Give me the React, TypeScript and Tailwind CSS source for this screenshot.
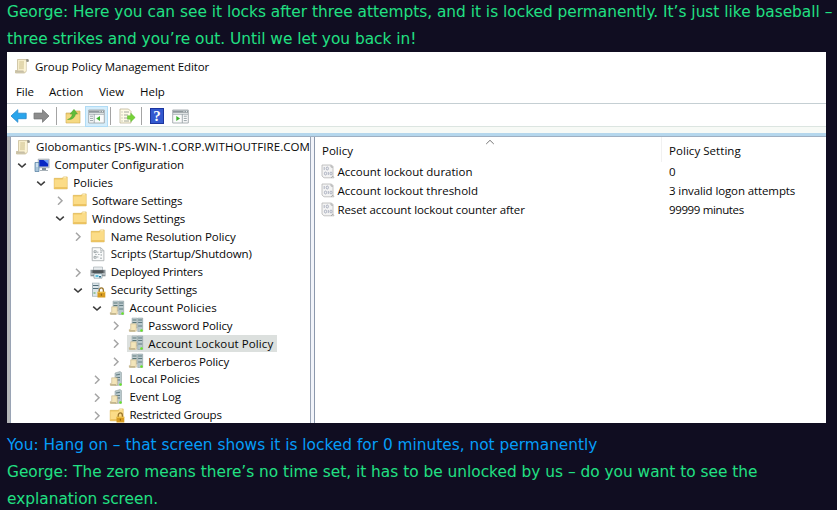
import type { ReactNode } from "react";

type IconKind = "scroll" | "computer" | "folder" | "script" | "printer" | "security" | "servers" | "server" | "lockedFolder";

function Scroll() {
  return (
    <svg width="16" height="16" viewBox="0 0 16 16">
      <path d="M3.5 1.5H14v2h-1.8v9.7l-1.5 1.8H1.5v-2.5h2z" fill="#f6edcb" stroke="#b9ab82" strokeWidth=".6" />
      <path d="M12 1.7l1-.8 1.8.8-.2 2h-2z" fill="#8e8e86" />
      <path d="M5.3 4h4.8M5.2 6h4.8M5.1 8h4.8M5 10h4.8" stroke="#cbbd8b" strokeWidth=".9" />
      <path d="M1.2 12.4h8l1.3 2.4H2z" fill="#c7bfa7" />
      <path d="M11 3v10" stroke="#fff9dd" strokeWidth="1.3" />
    </svg>
  );
}

function Folder({ locked = false }: { locked?: boolean }) {
  return (
    <svg width="16" height="16" viewBox="0 0 16 16">
      <path d="M1.2 3.3h8.2l1-1.4h3.8v12H1.2z" fill="#eec65f" stroke="#d5a83e" strokeWidth=".5" />
      <path d="M1.5 4.4h8l1.2-1.2h3.2v10.2H1.5z" fill="#fbdc87" />
      <path d="M10.5 2.3h3v1h-3.6z" fill="#fff4c6" />
      <path d="M1.5 12.9h12.7" stroke="#e3b64c" />
      {locked && <Padlock />}
    </svg>
  );
}

function Padlock() {
  return (
    <g>
      <path d="M9.2 11V8.7c0-3.7 4.2-3.7 4.2 0V11" fill="none" stroke="#99742a" strokeWidth="1.3" />
      <rect x="7.5" y="9.8" width="7.8" height="5.7" fill="#d79b20" />
      <path d="M7.5 10.3h7.8" stroke="#f2c64e" />
      <path d="M11.4 11.7v2" stroke="#946a14" strokeWidth="1.2" />
    </g>
  );
}

function TreeIcon({ kind }: { kind: IconKind }) {
  if (kind === "scroll") return <Scroll />;
  if (kind === "folder") return <Folder />;
  if (kind === "lockedFolder") return <Folder locked />;
  if (kind === "computer")
    return (
      <svg width="16" height="16" viewBox="0 0 16 16">
        <path d="M4.2 2h11v8.8h-11z" fill="#c6ccd2" stroke="#8e9aa5" strokeWidth=".5" />
        <path d="M5.2 3h9v6.5h-9z" fill="#0827c4" />
        <path d="M9.5 3h4.7v4z" fill="#6e9cf5" />
        <path d="M8 11h4v2H8z" fill="#7f8c97" />
        <path d="M6 13h8v1H6z" fill="#a7b1b8" />
        <path d="M1 5.5h4v9H1z" fill="#a9c5da" stroke="#527d9f" strokeWidth=".7" />
        <path d="M2 7h2M2 9h2" stroke="#f2faff" />
      </svg>
    );
  if (kind === "script")
    return (
      <svg width="16" height="16" viewBox="0 0 16 16">
        <path d="M2.2 1.7h8.7l3 3v10H2.2z" fill="#f9fafa" stroke="#a3a8aa" strokeWidth=".8" />
        <path d="M10.8 1.8v3h3" fill="none" stroke="#a6acad" strokeWidth=".8" />
        <path d="M4 4.8h2.2v1.8H4zM4 10.4h2.2v1.8H4zM10 6.2h2M10 12.2h2" fill="none" stroke="#8f989b" strokeWidth=".8" />
        <path d="M5.2 8.5h1.6M8 8.5h1.6M7.8 5.5v1.6M7.8 10.2v1.6M11.2 8v2" fill="none" stroke="#a5adaf" strokeWidth=".9" />
      </svg>
    );
  if (kind === "printer")
    return (
      <svg width="16" height="16" viewBox="0 0 16 16">
        <path d="M3.5 3h9v4h-9z" fill="#e9edef" stroke="#9ba5a9" strokeWidth=".6" />
        <path d="M.5 5.8h15v6.5H.5z" fill="#8b9498" />
        <path d="M2.5 6.2h11v3h-11z" fill="#4f5558" />
        <path d="M1 10h3M12 10h3" stroke="#e2e6e7" />
        <path d="M4 9.7h8v4.5H4z" fill="#e9f8fc" stroke="#74868e" strokeWidth=".6" />
        <path d="M5.5 11h3v2h-3z" fill="#61bfdd" />
        <path d="M9 12h2v1.5H9z" fill="#376b87" />
      </svg>
    );
  if (kind === "security")
    return (
      <svg width="16" height="16" viewBox="0 0 16 16">
        <path d="M2 .7h7.5v14H2z" fill="#a9b7bd" />
        <path d="M3 1.5h5.5v12.4H3z" fill="#dce6ea" />
        <path d="M3 3.5h5.5M3 6.5h5.5" stroke="#526d79" strokeWidth="1.2" />
        <path d="M3.5 11h2" stroke="#51a552" />
        <Padlock />
      </svg>
    );
  return (
    <svg width="16" height="16" viewBox="0 0 16 16">
      {kind === "servers" && (
        <g>
          <path d="M4 1h5.2v10H4z" fill="#c4d0d3" stroke="#92a3a5" strokeWidth=".5" />
          <path d="M4.5 3h4M4.5 5.5h4" stroke="#5b7777" />
        </g>
      )}
      <path d={kind === "server" ? "M6 2l5-1.5 1.5 1v12.8H6z" : "M9.7 1h5v13.5h-5z"} fill="#b8c8cc" stroke="#869799" strokeWidth=".5" />
      <path d={kind === "server" ? "M7 4l4-.7M7 6.5h4M7 9h4" : "M10.2 3h4M10.2 5.5h4M10.2 9h4"} stroke="#607a80" strokeWidth="1.1" />
      <circle cx={kind === "server" ? 11.5 : 13.5} cy="13.5" r="1.2" fill="#64e622" />
      <path d="M2.7 6.8h5.6v7.4H1.3v-1.8h1.4z" fill="#f3e5b9" stroke="#baa77a" strokeWidth=".5" />
      <path d="M1 13h6v1.8H1.5z" fill="#c5b78f" />
    </svg>
  );
}

function Chevron({ open }: { open: boolean }) {
  return (
    <svg width="10" height="10" viewBox="0 0 10 10" fill="none">
      {open ? <path d="M1.2 3.7 5 7l3.8-3.3" stroke="#3d3d3d" strokeWidth="1.6" /> : <path d="m3 1.7 4 4-4 4" stroke="#a5a5a5" strokeWidth="1.5" />}
    </svg>
  );
}

interface TreeItem {
  label: string;
  icon: IconKind;
  indent: string;
  tracking: string;
  open?: boolean;
  selected?: boolean;
}

const tree: TreeItem[] = [
  { label: "Computer Configuration", icon: "computer", indent: "pl-[6px]", tracking: "tracking-[-0.04px]", open: true },
  { label: "Policies", icon: "folder", indent: "pl-[24.7px]", tracking: "tracking-[-0.04px]", open: true },
  { label: "Software Settings", icon: "folder", indent: "pl-[43.5px]", tracking: "tracking-[-0.18px]", open: false },
  { label: "Windows Settings", icon: "folder", indent: "pl-[43.5px]", tracking: "tracking-[-0.08px]", open: true },
  { label: "Name Resolution Policy", icon: "folder", indent: "pl-[62.3px]", tracking: "tracking-[-0.05px]", open: false },
  { label: "Scripts (Startup/Shutdown)", icon: "script", indent: "pl-[62.3px]", tracking: "tracking-[-0.12px]" },
  { label: "Deployed Printers", icon: "printer", indent: "pl-[62.3px]", tracking: "tracking-[-0.25px]", open: false },
  { label: "Security Settings", icon: "security", indent: "pl-[62.3px]", tracking: "tracking-[-0.12px]", open: true },
  { label: "Account Policies", icon: "servers", indent: "pl-[81px]", tracking: "tracking-[0.06px]", open: true },
  { label: "Password Policy", icon: "servers", indent: "pl-[99.8px]", tracking: "tracking-[-0.1px]", open: false },
  { label: "Account Lockout Policy", icon: "servers", indent: "pl-[99.8px]", tracking: "tracking-[0.1px]", open: false, selected: true },
  { label: "Kerberos Policy", icon: "servers", indent: "pl-[99.8px]", tracking: "tracking-[-0.13px]", open: false },
  { label: "Local Policies", icon: "server", indent: "pl-[81px]", tracking: "tracking-[-0.03px]", open: false },
  { label: "Event Log", icon: "server", indent: "pl-[81px]", tracking: "tracking-[-0.05px]", open: false },
  { label: "Restricted Groups", icon: "lockedFolder", indent: "pl-[81px]", tracking: "tracking-[-0.25px]", open: false },
];

function TreeRow({ item }: { item: TreeItem }) {
  return (
    <div className={`flex h-[17.85px] shrink-0 items-center ${item.indent}`}>
      <span className="flex w-[10px] shrink-0 justify-center">{item.open !== undefined && <Chevron open={item.open} />}</span>
      <span className={`ml-[6px] flex h-[17px] items-center pr-[4px] pl-[1px] ${item.selected ? "bg-[#dce0de]" : ""}`}>
        <TreeIcon kind={item.icon} />
        <span className={`ml-[4.5px] whitespace-pre ${item.tracking}`}>{item.label}</span>
      </span>
    </div>
  );
}

function Arrow({ forward = false }: { forward?: boolean }) {
  return (
    <svg width="17" height="16" viewBox="0 0 17 16">
      {forward ? (
        <path d="M16 8 9.5 1.7v3.4H1v5.8h8.5v3.4z" fill="#8c8c8c" stroke="#777878" strokeWidth=".8" />
      ) : (
        <path d="M1 8l6.8-6.3v3.5h8.4v5.5H7.8v3.6z" fill="#29a5ec" stroke="#2588cb" strokeWidth=".8" />
      )}
    </svg>
  );
}

function PanelIcon({ right = false }: { right?: boolean }) {
  return (
    <svg width="17" height="15" viewBox="0 0 17 15">
      <path d="M.7 1h15.6v13H.7z" fill="#fafbfb" stroke="#a0a8ac" strokeWidth=".9" />
      <path d="M1 1.5h15v2.3H1z" fill="#8f989c" />
      <path d="M11.5 2.6h1M14 2.6h1" stroke="#edf1f3" />
      <path d={right ? "M1 5.2h15M10.3 5v9" : "M1 5.2h15M6.2 5v9"} stroke="#99a2a6" strokeWidth=".9" />
      <path d={right ? "M11.8 7.2h3M11.8 9.4h3M11.8 11.6h3" : "M2 7.2h3M2 9.4h3M2 11.6h3"} stroke="#8f9a9f" strokeWidth=".9" />
      <path d={right ? "M4.3 6.9v5.2l3.8-2.6z" : "M12 6.9v5.2L8.2 9.5z"} fill="#3fb32c" />
    </svg>
  );
}

function Separator() {
  return <span className="h-[18px] w-px shrink-0 bg-[#a4a4a4]" />;
}

function Toolbar() {
  return (
    <div className="flex h-[23px] items-center border-b border-[#dce5e1] pt-[2px] pl-[3px]">
      <Arrow />
      <span className="ml-[6px]"><Arrow forward /></span>
      <span className="ml-[6px] flex"><Separator /></span>
      <svg className="ml-[8px]" width="16" height="16" viewBox="0 0 16 16">
        <path d="M1 5h6l1.5-2H15v12H1z" fill="#eecb72" stroke="#c9a94f" strokeWidth=".6" />
        <path d="M1.5 6.5h13v8h-13z" fill="#f5d981" />
        <path d="M2.5 11.5c3-1 4.6-3 4.8-5.5H5l4-4.7L12.5 6h-2c-.5 3.7-3.5 6-8 5.500z" fill="#60bc3a" stroke="#459b2b" strokeWidth=".4" />
      </svg>
      <span className="ml-[4px] flex h-[21px] w-[23px] shrink-0 items-center justify-center border border-[#b0dcf6] bg-[#d4edfb]"><PanelIcon /></span>
      <span className="ml-[2px] flex"><Separator /></span>
      <svg className="ml-[8px]" width="17" height="16" viewBox="0 0 17 16">
        <path d="M1 1h8.500l2.5 2.500V15H1z" fill="#fffbe6" stroke="#b4ae8d" strokeWidth=".7" />
        <path d="M2.500 4h1M5 4h5M2.500 7h1M5 7h4M2.500 10h1M5 10h4M2.500 13h1M5 13h5" stroke="#999e95" strokeWidth=".9" />
        <path d="M8.500 7.800h3.300V5.200l4.400 4.300-4.400 4.300v-2.600H8.500z" fill="#76d336" stroke="#5bb532" strokeWidth=".5" />
      </svg>
      <span className="ml-[5px] flex"><Separator /></span>
      <span className="ml-[8px] flex h-[16px] w-[14px] items-center justify-center border border-[#1c359e] bg-[#3359cf] font-['Liberation_Serif',serif] text-[15px] leading-none font-bold text-white">?</span>
      <span className="ml-[8px]"><PanelIcon right /></span>
    </div>
  );
}

function BinaryIcon() {
  return (
    <svg width="14" height="15" viewBox="0 0 14 15">
      <path d="M1 1h9.500L12 2.600V12l1 1.800H3L1 12z" fill="#f3f3f3" stroke="#b5b5b5" strokeWidth=".8" />
      <g fill="none" stroke="#9aa1b4" strokeWidth=".8">
        <path d="M3.200 3v3M7.300 8v3" />
        <ellipse cx="6.300" cy="4.500" rx="1.100" ry="1.500" />
        <ellipse cx="4.500" cy="9.500" rx="1.100" ry="1.500" />
        <ellipse cx="10" cy="9.500" rx="1" ry="1.500" />
      </g>
      <path d="M10 1.300v1.800h2M10 13.800l2-1.700" fill="none" stroke="#969696" strokeWidth=".7" />
    </svg>
  );
}

const policies = [
  { name: "Account lockout duration", tracking: "tracking-normal", value: "0", valueTracking: "tracking-normal" },
  { name: "Account lockout threshold", tracking: "tracking-normal", value: "3 invalid logon attempts", valueTracking: "tracking-[-0.11px]" },
  { name: "Reset account lockout counter after", tracking: "tracking-[-0.1px]", value: "99999 minutes", valueTracking: "tracking-[-0.37px]" },
];

function PolicyList() {
  return (
    <div className="min-w-0 flex-1 border-l border-[#8c98ac] bg-white">
      <div className="grid h-[25px] grid-cols-[347px_1fr]">
        <div className="flex items-center justify-between border-r border-[#f1f1f1] pl-[7px]">
          <span className="pt-px">Policy</span>
          <svg className="mr-[166px] mb-[16px]" width="10" height="6" viewBox="0 0 10 6"><path d="m1.200 5 3.800-3.700L8.800 5" fill="none" stroke="#777" /></svg>
        </div>
        <span className="self-center pt-px pl-[7px] tracking-[0.05px]">Policy Setting</span>
      </div>
      {policies.map((p) => (
        <div key={p.name} className="grid h-[18.900px] grid-cols-[347px_1fr] items-center">
          <div className="flex items-center gap-[2.500px] pl-[6px]">
            <BinaryIcon />
            <span className={`whitespace-pre ${p.tracking}`}>{p.name}</span>
          </div>
          <span className={`pl-[7px] whitespace-pre ${p.valueTracking}`}>{p.value}</span>
        </div>
      ))}
    </div>
  );
}

function PolicyEditor() {
  return (
    <div className="flex h-[371px] w-[819px] flex-col overflow-hidden bg-white font-['Open_Sans',sans-serif] text-[11.5px] leading-[17px] text-[#080808]">
      <div className="flex h-[28px] items-center gap-[5px] pl-[7px]">
        <Scroll />
        <span className="tracking-[-0.1px]">Group Policy Management Editor</span>
      </div>
      <div className="flex h-[24px] items-center border-b border-[#c5cfd3] pl-[9px]">
        <span className="w-[33px] tracking-[-0.1px]">File</span>
        <span className="w-[50px] tracking-[0.1px]">Action</span>
        <span className="w-[41px]">View</span>
        <span>Help</span>
      </div>
      <Toolbar />
      <div className="h-[6px] shrink-0 bg-[#f7faf6]" />
      <div className="h-[3px] shrink-0 bg-[#b5d7ed]" />
      <div className="flex min-h-0 flex-1 border-t border-[#9eb0c3] bg-[#f2f4fa]">
        <div className="w-[3px] shrink-0 bg-[#b3b5b7]" />
        <div className="flex w-[301px] shrink-0 flex-col overflow-hidden border-x border-[#9aa4b5] bg-white pt-px">
          <div className="flex h-[17.85px] shrink-0 items-center gap-[5px] pl-[4px] whitespace-pre">
            <Scroll />
            <span className="tracking-[0.06px]">Globomantics [PS-WIN-1.CORP.WITHOUTFIRE.COM</span>
          </div>
          {tree.map((item) => <TreeRow key={item.label} item={item} />)}
        </div>
        <div className="w-[3px] shrink-0" />
        <PolicyList />
      </div>
    </div>
  );
}

function Speech({ tone, children }: { tone: string; children: ReactNode }) {
  return <p className={`whitespace-pre ${tone}`}>{children}</p>;
}

export default function App() {
  return (
    <main className="flow-root h-[510px] w-[837px] overflow-hidden bg-[#100d21] pl-[7px] font-['DejaVu_Sans',sans-serif] text-[15.36px] leading-[27px]">
      <div className="-mt-px h-[53px]">
        <Speech tone="text-[#21e083]">{"George: Here you can see it locks after three attempts, and it is locked permanently. It’s just like baseball –\nthree strikes and you’re out. Until we let you back in!"}</Speech>
      </div>
      <PolicyEditor />
      <div className="pt-[9px]">
        <Speech tone="text-[#059df8]">You: Hang on – that screen shows it is locked for 0 minutes, not permanently</Speech>
        <Speech tone="text-[#21e083]">{"George: The zero means there’s no time set, it has to be unlocked by us – do you want to see the\nexplanation screen."}</Speech>
      </div>
    </main>
  );
}
